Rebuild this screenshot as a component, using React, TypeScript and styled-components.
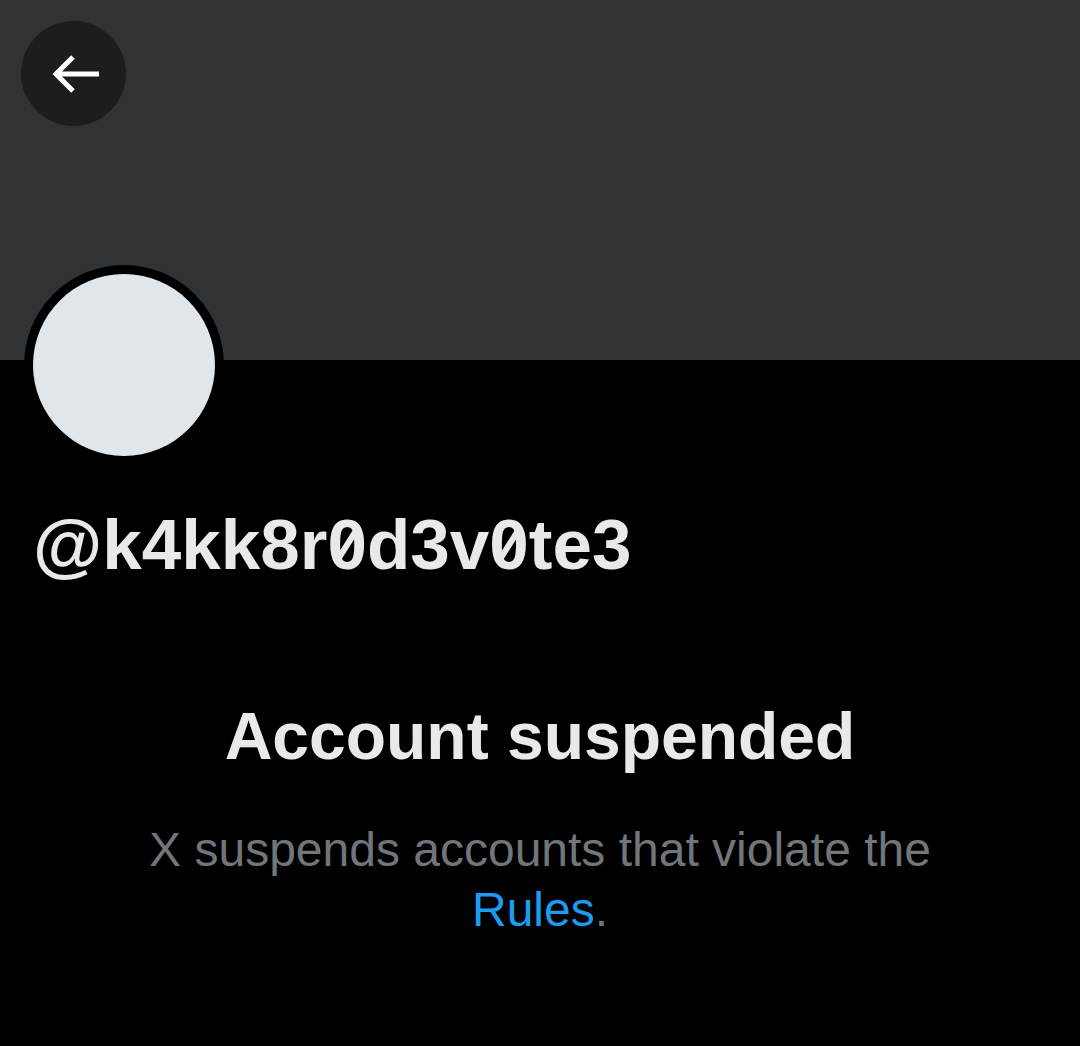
import styled, { createGlobalStyle } from 'styled-components'

const GlobalStyle = createGlobalStyle`
	html, body {
		margin: 0;
		padding: 0;
		background: #000;
	}
	body {
		font-family: 'Liberation Sans', Arial, sans-serif;
	}
`

// handle shows zeros slashed, like the app does
const handle = '@k4kk8r0d3v0te3'

const App = () => {
	return (
		<>
			<GlobalStyle />
			<Page>
				<Banner>
					<BackButton aria-label='Back'>
						<svg width='104' height='104' viewBox='0 0 104 104' fill='none'>
							<path
								d='M77 52H33M51 35L34 52l17 17'
								stroke='#fff'
								strokeWidth='5'
								strokeLinejoin='miter'
							/>
						</svg>
					</BackButton>
				</Banner>
				<Profile>
					<AvatarRing>
						<Avatar />
					</AvatarRing>
					<Handle>
						{handle.split('').map((ch, i) =>
							ch === '0' ? <Zero key={i}>0</Zero> : <span key={i}>{ch}</span>
						)}
					</Handle>
				</Profile>
				<Notice>
					<Title>Account suspended</Title>
					<Message>
						X suspends accounts that violate the <RulesLink href='#'>Rules</RulesLink>.
					</Message>
				</Notice>
			</Page>
		</>
	)
}

export default App

const Page = styled.div`
	width: 1080px;
	height: 1046px;
	background: #000;
	overflow: hidden;
`

const Banner = styled.div`
	height: 360px;
	background: #2f3336;
	padding: 21px 0 0 21px;
	box-sizing: border-box;
`

const BackButton = styled.button`
	width: 105px;
	height: 105px;
	border-radius: 50%;
	border: none;
	background: #1b1d1f;
	display: flex;
	align-items: center;
	justify-content: center;
	padding: 0;
	cursor: pointer;
`

const Profile = styled.div`
	padding: 0 0 0 24px;
	margin-top: -95px;
`

const AvatarRing = styled.div`
	width: 200px;
	height: 200px;
	border-radius: 50%;
	background: #000;
	display: flex;
	align-items: center;
	justify-content: center;
`

const Avatar = styled.div`
	width: 182px;
	height: 182px;
	border-radius: 50%;
	background: #e1e6ea;
`

const Handle = styled.div`
	margin: 40px 0 0 9px;
	color: #e7e9ea;
	font-size: 71px;
	font-weight: 700;
	line-height: 80px;
	white-space: nowrap;
`

const Zero = styled.span`
	position: relative;
	display: inline-block;

	&::after {
		content: '';
		position: absolute;
		left: 50%;
		top: 50%;
		width: 6px;
		height: 40px;
		background: #e7e9ea;
		transform: translate(-50%, -50%) rotate(32deg);
	}
`

const Notice = styled.div`
	margin-top: 113px;
	display: flex;
	flex-direction: column;
	align-items: center;
	text-align: center;
`

const Title = styled.h2`
	margin: 0;
	color: #e7e9ea;
	font-size: 66px;
	font-weight: 700;
	line-height: 76px;
`

const Message = styled.p`
	margin: 46px 0 0;
	width: 820px;
	color: #71767b;
	font-size: 48px;
	line-height: 60px;
`

const RulesLink = styled.a`
	color: #1d9bf0;
	text-decoration: none;
`
